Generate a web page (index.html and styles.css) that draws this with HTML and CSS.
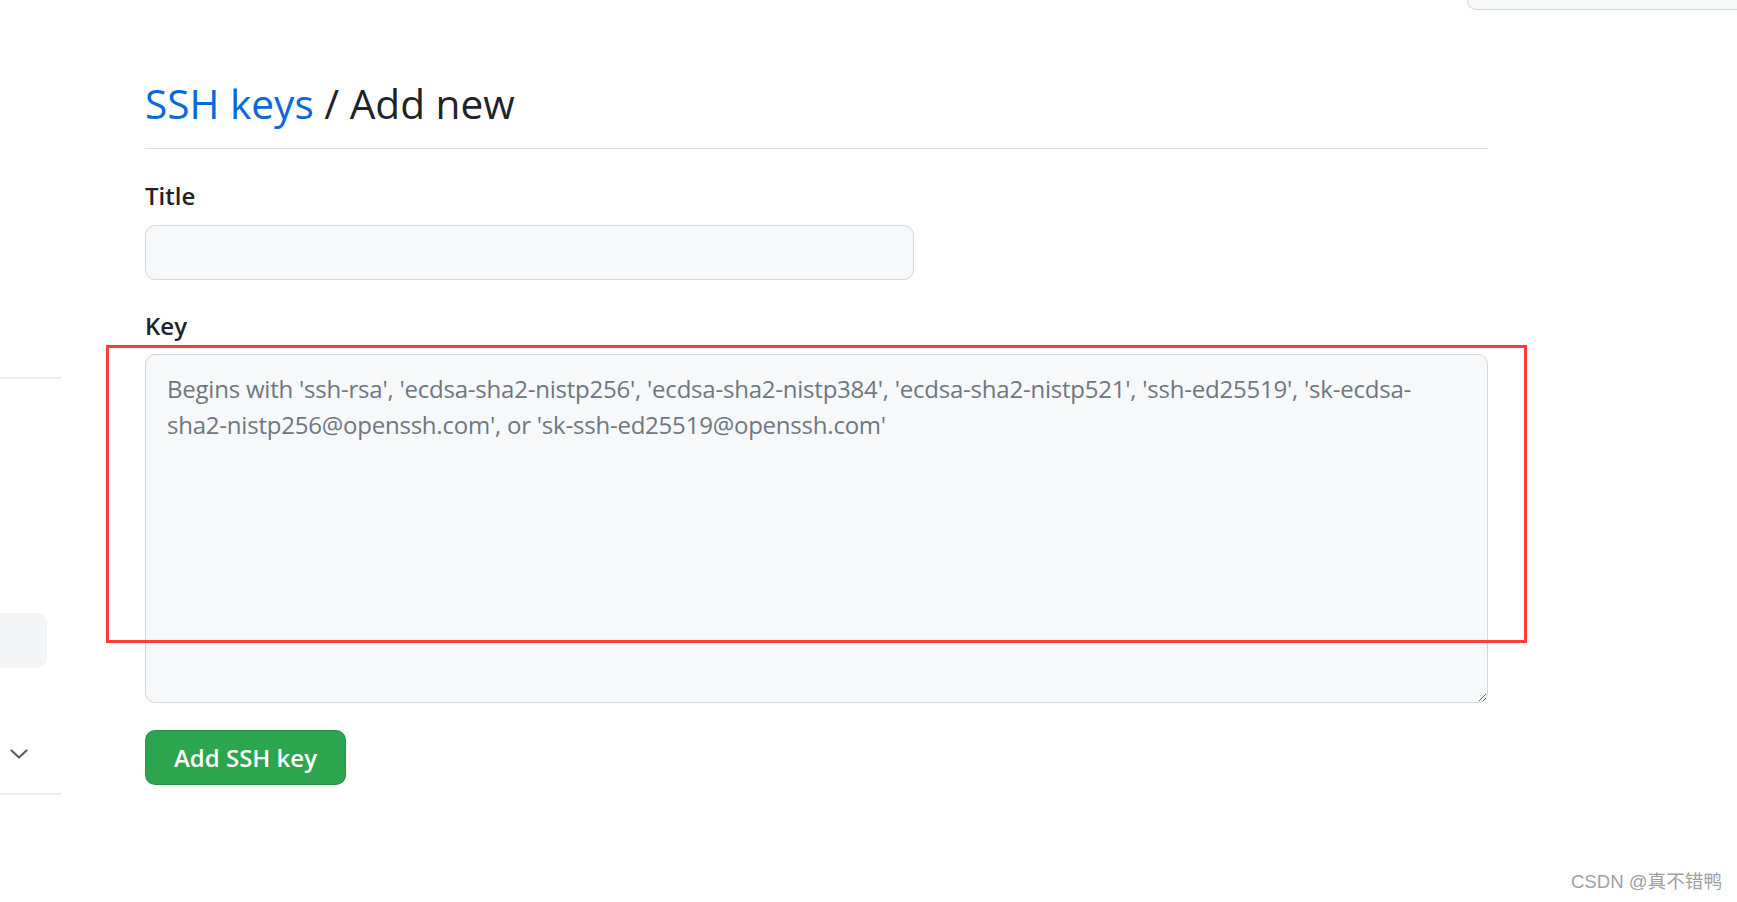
FILE: index.html
```html
<!DOCTYPE html>
<html lang="en">
<head>
<meta charset="utf-8">
<title>Add new SSH key</title>
<link rel="stylesheet" href="styles.css">
</head>
<body>
<div class="topbar"><div class="topbox"></div></div>
<div class="layout">
  <aside class="sidebar">
    <div class="side-line side-line-top"></div>
    <div class="side-item"></div>
    <div class="side-chevron">
      <svg width="18" height="10" viewBox="0 0 18 10"><path d="M1.5 1.5 L9 8.5 L16.5 1.5" fill="none" stroke="#57606a" stroke-width="2.2" stroke-linecap="round" stroke-linejoin="round"/></svg>
    </div>
    <div class="side-line"></div>
  </aside>
  <main class="content">
    <h2 class="subhead"><a class="subhead-link" href="#">SSH keys</a> / Add new</h2>
    <form class="form">
      <label class="label" for="title">Title</label>
      <input class="input" id="title" type="text">
      <label class="label label-key" for="key">Key</label>
      <div class="key-wrap">
        <textarea class="textarea" id="key" placeholder="Begins with 'ssh-rsa', 'ecdsa-sha2-nistp256', 'ecdsa-sha2-nistp384', 'ecdsa-sha2-nistp521', 'ssh-ed25519', 'sk-ecdsa-sha2-nistp256@openssh.com', or 'sk-ssh-ed25519@openssh.com'"></textarea>
        <div class="annotation"></div>
      </div>
      <button class="btn" type="button">Add SSH key</button>
    </form>
  </main>
</div>
<div class="watermark">CSDN @真不错鸭</div>
</body>
</html>
```
FILE: styles.css
```css
* { box-sizing: border-box; }
html, body { margin: 0; padding: 0; background: #ffffff; }
body {
  font-family: "Open Sans", "Noto Sans", sans-serif;
  color: #1f2328;
  width: 1737px;
  height: 902px;
  overflow: hidden;
  position: relative;
}
.topbar {
  height: 10px;
  display: flex;
  justify-content: flex-end;
}
.topbox {
  width: 270px;
  height: 11px;
  margin-top: -1px;
  background: #f6f8fa;
  border-left: 1px solid #d0d7de;
  border-bottom: 1px solid #d0d7de;
  border-bottom-left-radius: 9px;
}
.layout {
  display: flex;
}
.sidebar {
  width: 61px;
  flex: none;
  display: flex;
  flex-direction: column;
}
.side-line {
  height: 2px;
  background: #e8ebef;
}
.side-line-top { margin-top: 367px; }
.side-item {
  margin-top: 234px;
  width: 47px;
  height: 55px;
  background: #f3f4f6;
  border-radius: 0 10px 10px 0;
}
.side-chevron {
  margin-top: 81px;
  padding-left: 10px;
  height: 10px;
  display: flex;
}
.side-chevron + .side-line { margin-top: 34px; }
.content {
  margin-left: 84px;
  width: 1343px;
}
.subhead {
  margin: 69px 0 0;
  font-size: 40.6px;
  font-weight: 400;
  line-height: 50px;
  padding-bottom: 19px;
  border-bottom: 1px solid #d8dee4;
  color: #1f2328;
}
.subhead-link {
  color: #0969da;
  text-decoration: none;
}
.form {
  display: flex;
  flex-direction: column;
  align-items: flex-start;
}
.label {
  display: block;
  margin-top: 29px;
  font-size: 24px;
  font-weight: 600;
  line-height: 36px;
}
.label-key { margin-top: 28px; }
.input {
  margin-top: 11px;
  width: 769px;
  height: 55px;
  background: #f6f8fa;
  border: 1px solid #d0d7de;
  border-radius: 10px;
  font-family: inherit;
  font-size: 24px;
  padding: 0 21px;
}
.key-wrap {
  position: relative;
  margin-top: 10px;
  width: 1343px;
}
.textarea {
  display: block;
  width: 1343px;
  height: 349px;
  background: #f6f8fa;
  border: 1px solid #d0d7de;
  border-radius: 10px;
  font-family: inherit;
  font-size: 24px;
  line-height: 36px;
  letter-spacing: -0.22px;
  padding: 16px 21px 15px;
  color: #1f2328;
}
.textarea::placeholder { color: #6e7781; }
.annotation {
  position: absolute;
  left: -39px;
  top: -9px;
  width: 1421px;
  height: 298px;
  border: 3px solid #ff3b3b;
  pointer-events: none;
}
.btn {
  margin-top: 27px;
  width: 201px;
  height: 55px;
  background: #2da44e;
  color: #ffffff;
  border: 1px solid rgba(31, 35, 40, 0.15);
  border-radius: 10px;
  font-family: inherit;
  font-size: 24px;
  font-weight: 600;
  padding: 0;
}
.watermark {
  position: absolute;
  right: 15px;
  bottom: 9px;
  font-family: "Liberation Sans", "Noto Sans CJK SC", sans-serif;
  font-size: 18.6px;
  color: #a0a0a0;
}
```
